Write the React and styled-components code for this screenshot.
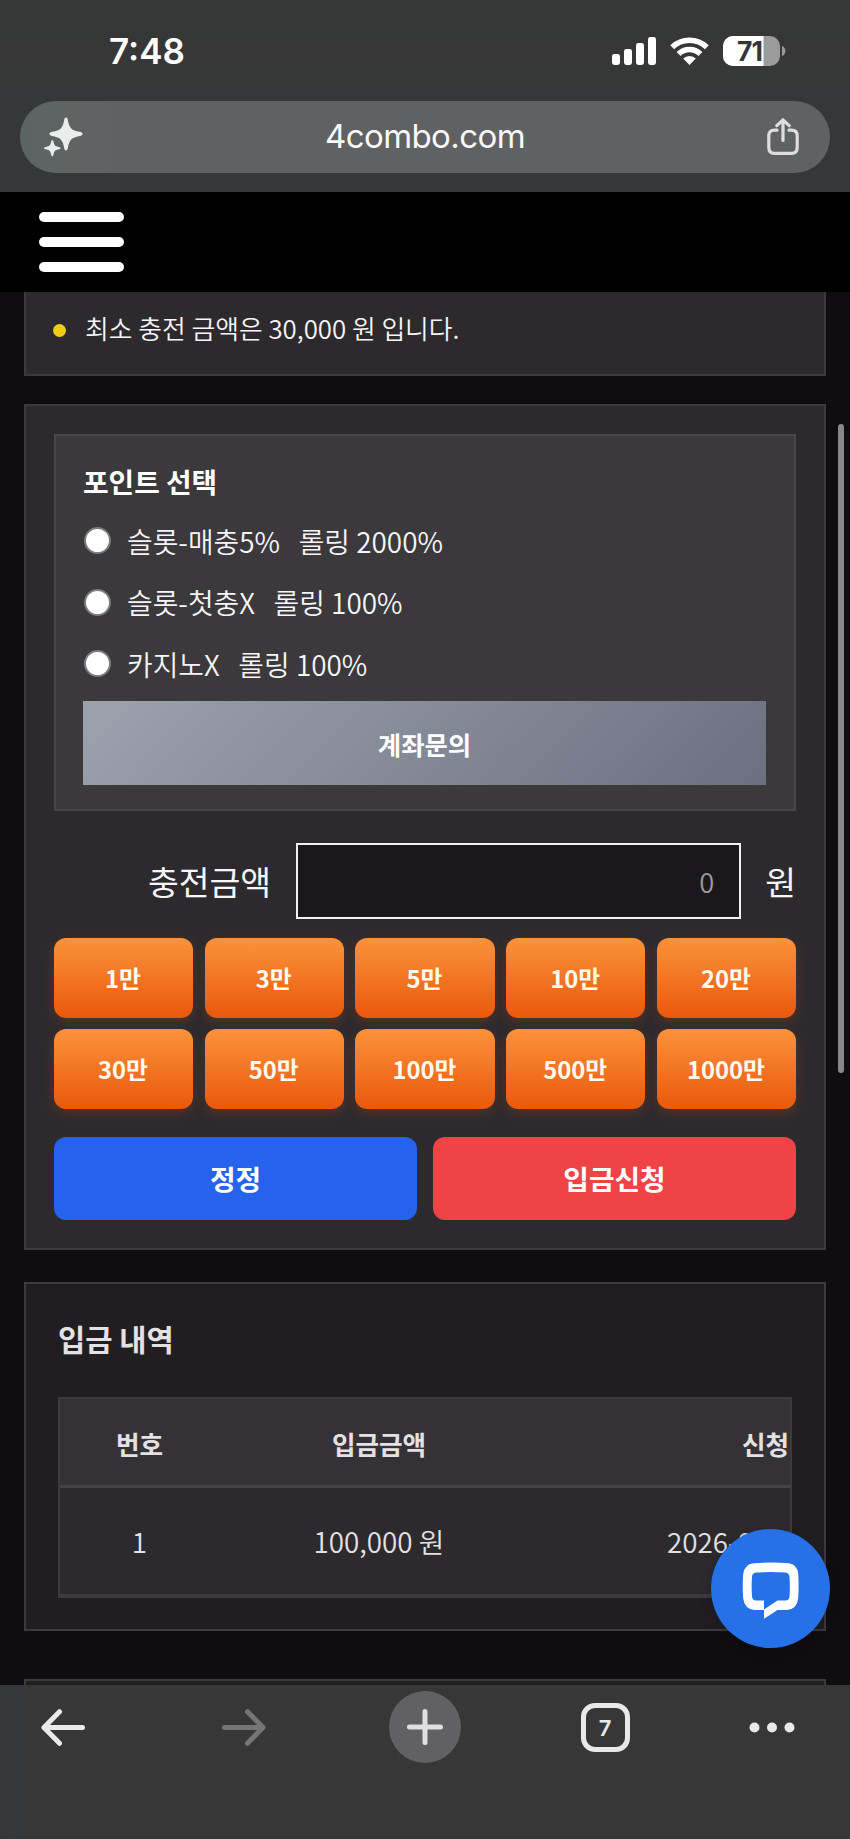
import React from 'react';
import styled, { createGlobalStyle, css } from 'styled-components';

const GlobalStyle = createGlobalStyle`
    * {
        box-sizing: border-box;
    }
    body {
        margin: 0;
        background: #0f0d10;
        font-family: 'Noto Sans CJK KR', sans-serif;
        color: #f7f5f8;
    }
    button, input {
        font-family: inherit;
        margin: 0;
    }
`;

const Screen = styled.div`
    position: relative;
    display: flex;
    flex-direction: column;
    width: 850px;
    height: 1839px;
    overflow: hidden;
`;

/* browser chrome */

const BrowserTop = styled.header`
    flex: none;
    height: 192px;
    padding: 0 20px;
    background: linear-gradient(#343938 0, #363736 50px, #363739 130px);
    font-family: Inter, sans-serif;
`;

const StatusBar = styled.div`
    display: flex;
    align-items: center;
    height: 101px;
    padding: 0 43px 0 89px;
`;

const Time = styled.span`
    margin-right: auto;
    padding-top: 2px;
    font-size: 35px;
    font-weight: 600;
    line-height: 99px;
    color: #fff;
`;

const StatusIcon = styled.svg`
    display: block;
    margin-left: ${props => props.$gap || 0}px;
`;

const AddressBar = styled.div`
    display: flex;
    align-items: center;
    justify-content: space-between;
    height: 72px;
    padding: 0 30.5px 0 23.5px;
    border-radius: 36px;
    background: linear-gradient(90deg, #5b6463 0, #5f6463 50px, #606163 90px);
`;

const Url = styled.span`
    padding-bottom: 2px;
    font-size: 33px;
    line-height: 70px;
    letter-spacing: -0.6px;
    color: #f8f8f9;
`;

const BrowserBottom = styled.footer`
    flex: none;
    display: flex;
    align-items: flex-start;
    gap: 91px;
    height: 154px;
    padding: 6px 0 0 18px;
    background: linear-gradient(90deg, #343839, #373738 30px);
`;

const NavButton = styled.button`
    display: flex;
    align-items: center;
    justify-content: center;
    flex: none;
    width: 90px;
    height: 72px;
    padding: 0;
    border: 0;
    background: none;
    &:nth-child(4) {
        margin-left: -1px;
    }
    &:last-child {
        margin-left: -14px;
    }
`;

const NewTab = styled.span`
    display: flex;
    align-items: center;
    justify-content: center;
    width: 72px;
    height: 72px;
    border-radius: 50%;
    background: #616163;
`;

const TabCount = styled.span`
    width: 49px;
    height: 49px;
    border: 5px solid #e9e8ea;
    border-radius: 14px;
    font: 600 22px/40px Inter, sans-serif;
    text-align: center;
    color: #e9e8ea;
`;

/* site */

const SiteHeader = styled.div`
    flex: none;
    height: 100px;
    padding: 20px 39px;
    background: #000;
`;

const MenuButton = styled.button`
    display: flex;
    flex-direction: column;
    gap: 15px;
    width: 85px;
    padding: 0;
    border: 0;
    background: none;
    span {
        height: 10px;
        border-radius: 5px;
        background: #fff;
    }
`;

const Page = styled.main`
    flex: 1;
    min-height: 0;
    padding: 0 24px;
    overflow: hidden;
`;

const card = css`
    border: 2px solid #3c3a3d;
    background: #2d2a2e;
`;

const Notice = styled.section`
    ${card}
    display: flex;
    align-items: flex-start;
    height: 84px;
    padding-left: 27px;
    border-top: 0;
    font-size: 25.8px;
    font-weight: 350;
    line-height: 71px;
`;

const Bullet = styled.i`
    width: 13px;
    height: 13px;
    margin: 32px 19px 0 0;
    border-radius: 50%;
    background: #f0cb1c;
`;

const DepositCard = styled.section`
    ${card}
    height: 846px;
    margin-top: 28px;
    padding: 28px;
`;

const PointBox = styled.div`
    height: 377px;
    padding: 26px 28px 0 27px;
    border: 2px solid #48464a;
    background: #3b393c;
`;

const PointTitle = styled.h3`
    margin: 0;
    font-size: 27.8px;
    font-weight: 700;
    line-height: 38px;
    color: #fff;
`;

const PointOption = styled.label`
    display: flex;
    align-items: center;
    height: 61.5px;
    font-size: 27.9px;
    font-weight: 350;
    white-space: pre;
    &:first-of-type {
        margin-top: 10px;
    }
`;

const Radio = styled.input`
    appearance: none;
    width: 27px;
    height: 27px;
    margin: 0 16px 0 1px;
    border: 2px solid #7c7b7e;
    border-radius: 50%;
    background: #fff;
`;

const InquiryButton = styled.button`
    display: block;
    width: 100%;
    height: 84px;
    margin-top: 6.5px;
    padding: 2px 0 0;
    border: 0;
    background: linear-gradient(135deg, #9ca3af, #6b7080);
    font-size: 25.4px;
    font-weight: 700;
    color: #fff;
`;

const AmountRow = styled.div`
    display: flex;
    align-items: center;
    justify-content: flex-end;
    margin-top: 32px;
    font-size: 33.5px;
    line-height: 76px;
`;

const AmountInput = styled.input`
    width: 445px;
    height: 76px;
    margin: 0 24px 0 25px;
    padding: 0 25px;
    border: 2px solid #f2f0f3;
    border-radius: 0;
    background: #1b181b;
    font-size: 27.3px;
    font-weight: 350;
    text-align: right;
    &::placeholder {
        color: #9d9b9f;
    }
`;

const AmountGrid = styled.div`
    display: grid;
    grid-template-columns: repeat(5, 1fr);
    gap: 11.7px;
    margin-top: 19px;
`;

const AmountButton = styled.button`
    height: 79.7px;
    padding: 0 1px 1px 0;
    border: 0;
    border-radius: 12px;
    background: linear-gradient(#fb923c, #ea580c);
    box-shadow: 0 4px 12px rgba(234, 88, 12, 0.22);
    font-size: 23.8px;
    font-weight: 700;
    color: #fffaf0;
`;

const Actions = styled.div`
    display: grid;
    grid-template-columns: 1fr 1fr;
    gap: 16px;
    margin-top: 28px;
`;

const ActionButton = styled.button`
    height: 83px;
    padding: 0 0 1px;
    border: 0;
    border-radius: 12px;
    background: ${props => props.$color};
    font-size: 27.8px;
    font-weight: 700;
    color: #fff;
`;

const HistoryCard = styled.section`
    ${card}
    height: 349px;
    margin-top: 32px;
    padding: 32px;
    background: #211e21;
    color: #e4e1e5;
`;

const HistoryTitle = styled.h3`
    margin: 0 0 36px;
    font-size: 29.6px;
    font-weight: 700;
    line-height: 45px;
`;

const Table = styled.div`
    height: 201px;
    border: 2px solid #3c3a3d;
    background: #2d2a2e;
    overflow: hidden;
`;

const TableRow = styled.div`
    display: grid;
    grid-template-columns: 159px 320px 1fr;
    height: ${props => props.$head ? 89 : 108}px;
    border-bottom: ${props => props.$head ? '3px solid #454346' : '2px solid #3c3a3d'};
    background: ${props => props.$head ? '#353235' : 'transparent'};
    font-size: ${props => props.$head ? 25.6 : 27.8}px;
    font-weight: ${props => props.$head ? 700 : 350};
    line-height: ${props => props.$head ? 90 : 106}px;
    text-align: center;
    white-space: nowrap;
`;

const DateCell = styled.span`
    padding-left: ${props => props.$indent}px;
    text-align: left;
`;

const NextCard = styled.section`
    ${card}
    height: 60px;
    margin-top: 48px;
    background: #211e21;
`;

const Scrollbar = styled.div`
    position: absolute;
    top: 424px;
    right: 6px;
    width: 6px;
    height: 649px;
    border-radius: 3px;
    background: #89878b;
`;

const ChatButton = styled.button`
    position: absolute;
    right: 20px;
    bottom: 191px;
    width: 119px;
    height: 119px;
    padding: 0;
    border: 0;
    border-radius: 50%;
    background: #2671e8;
    box-shadow: 0 4px 14px rgba(0, 0, 0, 0.2);
    svg {
        display: block;
    }
`;

const options = [
    '슬롯-매충5%   롤링 2000%',
    '슬롯-첫충X   롤링 100%',
    '카지노X   롤링 100%',
];

const amounts = ['1만', '3만', '5만', '10만', '20만', '30만', '50만', '100만', '500만', '1000만'];

function Signal() {
    return <StatusIcon width="44" height="28" viewBox="0 0 44 28" fill="#fff">
        <rect x="0" y="17" width="8" height="11" rx="2.4" />
        <rect x="12" y="12" width="8" height="16" rx="2.4" />
        <rect x="24" y="6" width="8" height="22" rx="2.4" />
        <rect x="36" y="0" width="8" height="28" rx="2.4" />
    </StatusIcon>
}

function Wifi() {
    return <StatusIcon $gap={14} width="39" height="28" viewBox="0 0 39 28" fill="none" stroke="#fff" strokeWidth="5.6">
        <path d="M2.2 10.2 A25 25 0 0 1 36.8 10.2" />
        <path d="M8.6 17 A15.6 15.6 0 0 1 30.4 17" />
        <path d="M13.2 21.6 A9 9 0 0 1 25.8 21.6 L19.5 28 Z" fill="#fff" stroke="none" />
    </StatusIcon>
}

function Battery() {
    return <StatusIcon $gap={14} width="64" height="30" viewBox="0 0 64 30">
        <rect width="57" height="30" rx="10" fill="#9b9b9b" />
        <path d="M10 0 H40.5 V30 H10 A10 10 0 0 1 0 20 V10 A10 10 0 0 1 10 0 Z" fill="#fff" />
        <path d="M59 10 C63.5 11.5 63.5 18.5 59 20 Z" fill="#9b9b9b" />
        <text x="14" y="24.5" fontFamily="Inter, sans-serif" fontSize="26.5" fontWeight="700" letterSpacing="-1" fill="#343635">71</text>
    </StatusIcon>
}

function Sparkles() {
    return <svg width="39" height="40" viewBox="0 0 39 40" fill="#e9eeed">
        <path d="M22 0.5 C23.2 0.5 23.5 1.5 23.8 3 C25.5 11.5 27.5 13.3 35.5 14.8 C37.5 15.2 38.5 15.6 38.5 17 C38.5 18.3 37.5 18.7 35.5 19 C27.5 20.7 25.5 22.5 23.8 31 C23.5 32.6 23.2 33.5 22 33.5 C20.8 33.5 20.5 32.6 20.2 31 C18.5 22.5 16.5 20.7 8.5 19 C6.5 18.7 5.5 18.3 5.5 17 C5.5 15.6 6.5 15.2 8.5 14.8 C16.5 13.3 18.5 11.5 20.2 3 C20.5 1.5 20.8 0.5 22 0.5 Z" />
        <path d="M8.3 23.2 C9 23.2 9.2 23.7 9.4 24.6 C10.3 28.6 11 29.3 15 30.1 C16 30.3 16.4 30.6 16.4 31.2 C16.4 31.9 16 32.1 15 32.3 C11 33.1 10.3 33.8 9.4 37.8 C9.2 38.8 9 39.2 8.3 39.2 C7.6 39.2 7.4 38.8 7.2 37.8 C6.3 33.8 5.6 33.1 1.6 32.3 C0.6 32.1 0.2 31.9 0.2 31.2 C0.2 30.6 0.6 30.3 1.6 30.1 C5.6 29.3 6.3 28.6 7.2 24.6 C7.4 23.7 7.6 23.2 8.3 23.2 Z" />
    </svg>
}

function Share() {
    return <svg width="32" height="38" viewBox="0 0 32 38" fill="none" stroke="#dedee0" strokeWidth="3.2" strokeLinecap="round" strokeLinejoin="round">
        <path d="M10 12.2 H7.5 C3.5 12.2 1.8 14 1.8 18 V29.5 C1.8 33.5 3.5 35.4 7.5 35.4 H24.5 C28.5 35.4 30.2 33.5 30.2 29.5 V18 C30.2 14 28.5 12.2 24.5 12.2 H22" />
        <path d="M16 22.5 V2.2 M9.8 7.6 L16 1.8 L22.2 7.6" />
    </svg>
}

function Arrow({ color, flip }) {
    return <svg width="44" height="38" viewBox="0 0 44 38" fill="none" stroke={color} strokeWidth="5" strokeLinecap="round" strokeLinejoin="round">
        <path d={flip ? 'M2.5 19.5 H41 M25.5 3.7 L41 19.5 L25.5 35.3' : 'M41.5 19.5 H3 M18.5 3.7 L3 19.5 L18.5 35.3'} />
    </svg>
}

export default function App() {
    return (
        <Screen>
            <GlobalStyle />
            <BrowserTop>
                <StatusBar>
                    <Time>7:48</Time>
                    <Signal />
                    <Wifi />
                    <Battery />
                </StatusBar>
                <AddressBar>
                    <Sparkles />
                    <Url>4combo.com</Url>
                    <Share />
                </AddressBar>
            </BrowserTop>

            <SiteHeader>
                <MenuButton aria-label="menu">
                    <span />
                    <span />
                    <span />
                </MenuButton>
            </SiteHeader>

            <Page>
                <Notice>
                    <Bullet />
                    최소 충전 금액은 30,000 원 입니다.
                </Notice>

                <DepositCard>
                    <PointBox>
                        <PointTitle>포인트 선택</PointTitle>
                        {options.map(option => (
                            <PointOption key={option}>
                                <Radio type="radio" name="point" />
                                {option}
                            </PointOption>
                        ))}
                        <InquiryButton>계좌문의</InquiryButton>
                    </PointBox>

                    <AmountRow>
                        충전금액
                        <AmountInput placeholder="0" />
                        원
                    </AmountRow>

                    <AmountGrid>
                        {amounts.map(amount => <AmountButton key={amount}>{amount}</AmountButton>)}
                    </AmountGrid>

                    <Actions>
                        <ActionButton $color="#2662eb">정정</ActionButton>
                        <ActionButton $color="#ef4346">입금신청</ActionButton>
                    </Actions>
                </DepositCard>

                <HistoryCard>
                    <HistoryTitle>입금 내역</HistoryTitle>
                    <Table>
                        <TableRow $head>
                            <span>번호</span>
                            <span>입금금액</span>
                            <DateCell $indent={203}>신청</DateCell>
                        </TableRow>
                        <TableRow>
                            <span>1</span>
                            <span>100,000 원</span>
                            <DateCell $indent={128}>2026-0</DateCell>
                        </TableRow>
                    </Table>
                </HistoryCard>

                <NextCard />
            </Page>

            <BrowserBottom>
                <NavButton aria-label="back"><Arrow color="#ebe9ec" /></NavButton>
                <NavButton aria-label="forward"><Arrow color="#757477" flip /></NavButton>
                <NavButton aria-label="new tab">
                    <NewTab>
                        <svg width="36" height="36" viewBox="0 0 36 36" stroke="#e0dfe1" strokeWidth="5" strokeLinecap="round">
                            <path d="M18 2.5 V33.5 M2.5 18 H33.5" />
                        </svg>
                    </NewTab>
                </NavButton>
                <NavButton aria-label="tabs"><TabCount>7</TabCount></NavButton>
                <NavButton aria-label="more">
                    <svg width="46" height="12" viewBox="0 0 46 12" fill="#e9e8ea">
                        <circle cx="5.5" cy="6.5" r="5" />
                        <circle cx="23" cy="6.5" r="5" />
                        <circle cx="40.5" cy="6.5" r="5" />
                    </svg>
                </NavButton>
            </BrowserBottom>

            <Scrollbar />
            <ChatButton aria-label="chat">
                <svg width="119" height="119" viewBox="0 0 119 119">
                    <path fill="#fff" fillRule="evenodd" d="M42.5 34.2 Q60 33 77.5 34.2 Q86.5 35.2 87.2 45 Q88 57 87.2 69.5 Q86 80 76 81 L66.5 81 L53 89.7 V81 H43.5 Q33.5 80 32.2 69.5 Q31.3 57 32.2 45 Q33.5 35.2 42.5 34.2 Z M45 43.5 Q41.3 44 41 47.5 Q40.3 57 41 67.5 Q41.5 71.3 45 71.5 H53 V80.5 L66.5 71.5 H74.5 Q78 71.3 78.5 67.5 Q79.2 57 78.5 47.5 Q78 44 74.5 43.5 Q60 42.6 45 43.5 Z" />
                </svg>
            </ChatButton>
        </Screen>
    );
}
